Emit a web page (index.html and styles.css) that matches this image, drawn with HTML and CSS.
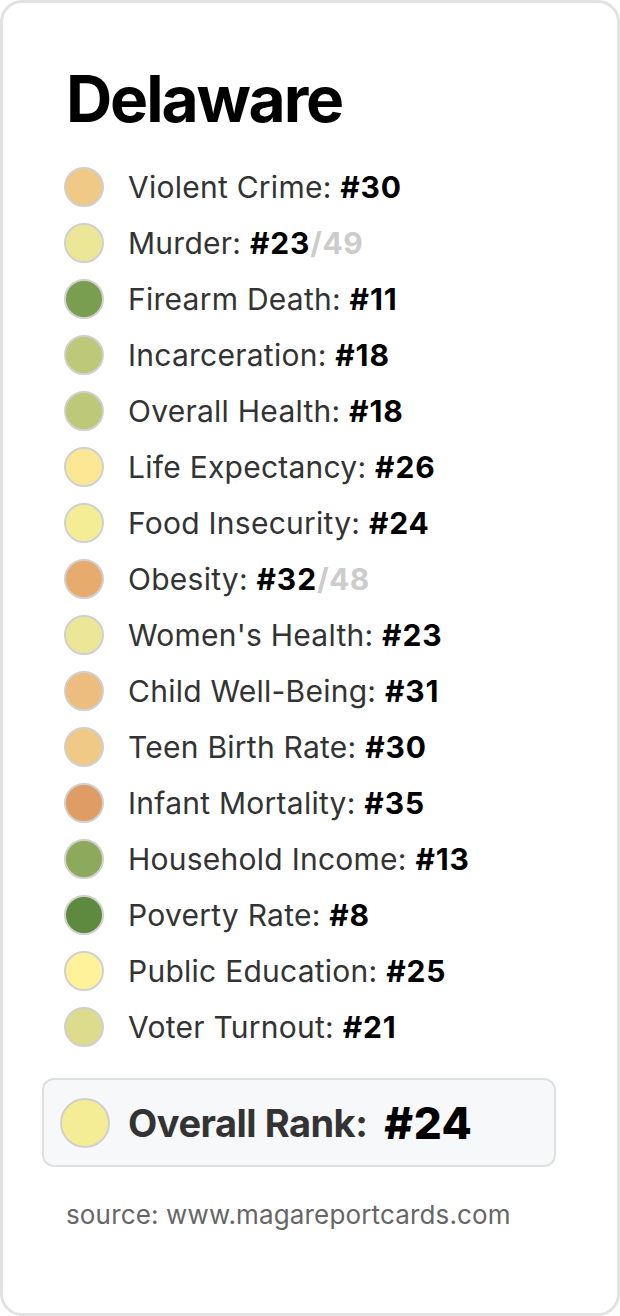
FILE: index.html
```html
<!DOCTYPE html>
<html lang="en">
<head>
<meta charset="utf-8">
<title>Delaware</title>
<link rel="stylesheet" href="styles.css">
</head>
<body>
<div class="card">
  <h1 class="title">Delaware</h1>
  <ul class="list">
    <li class="row"><span class="dot" style="background:#f0c987"></span><span class="label">Violent Crime: <b>#30</b></span></li>
    <li class="row"><span class="dot" style="background:#ece797"></span><span class="label">Murder: <b>#23</b><b class="of">/49</b></span></li>
    <li class="row"><span class="dot" style="background:#7a9e50"></span><span class="label">Firearm Death: <b>#11</b></span></li>
    <li class="row"><span class="dot" style="background:#bdc878"></span><span class="label">Incarceration: <b>#18</b></span></li>
    <li class="row"><span class="dot" style="background:#bdc878"></span><span class="label">Overall Health: <b>#18</b></span></li>
    <li class="row"><span class="dot" style="background:#fbe794"></span><span class="label">Life Expectancy: <b>#26</b></span></li>
    <li class="row"><span class="dot" style="background:#f5ec96"></span><span class="label">Food Insecurity: <b>#24</b></span></li>
    <li class="row"><span class="dot" style="background:#e8ab6e"></span><span class="label">Obesity: <b>#32</b><b class="of">/48</b></span></li>
    <li class="row"><span class="dot" style="background:#ece797"></span><span class="label">Women's Health: <b>#23</b></span></li>
    <li class="row"><span class="dot" style="background:#ecbd7e"></span><span class="label">Child Well-Being: <b>#31</b></span></li>
    <li class="row"><span class="dot" style="background:#f0c987"></span><span class="label">Teen Birth Rate: <b>#30</b></span></li>
    <li class="row"><span class="dot" style="background:#e09c65"></span><span class="label">Infant Mortality: <b>#35</b></span></li>
    <li class="row"><span class="dot" style="background:#8daa5c"></span><span class="label">Household Income: <b>#13</b></span></li>
    <li class="row"><span class="dot" style="background:#5e8a40"></span><span class="label">Poverty Rate: <b>#8</b></span></li>
    <li class="row"><span class="dot" style="background:#fef39a"></span><span class="label">Public Education: <b>#25</b></span></li>
    <li class="row"><span class="dot" style="background:#dcdc8c"></span><span class="label">Voter Turnout: <b>#21</b></span></li>
  </ul>
  <div class="overall">
    <span class="dot big" style="background:#f5ec96"></span>
    <span class="overall-label">Overall Rank:</span>
    <span class="overall-rank">#24</span>
  </div>
  <p class="source">source: www.magareportcards.com</p>
</div>
</body>
</html>
```

FILE: styles.css
```css
html, body {
  margin: 0;
  padding: 0;
  background: #ffffff;
}

body {
  font-family: Inter, "Liberation Sans", Arial, sans-serif;
  color: #333333;
}

.card {
  box-sizing: border-box;
  width: 620px;
  height: 1316px;
  border: 3px solid #e2e2e2;
  border-radius: 22px;
  background: #ffffff;
  padding: 60px 62px 0 39px;
}

.title {
  margin: 0 0 0 24px;
  font-size: 64px;
  line-height: 72px;
  font-weight: 700;
  color: #000000;
  letter-spacing: -2.1px;
}

.list {
  list-style: none;
  margin: 24px 0 0 0;
  padding: 0 0 0 22px;
}

.row {
  display: flex;
  align-items: center;
  height: 56px;
  gap: 24px;
}

.dot {
  flex: none;
  box-sizing: border-box;
  width: 40px;
  height: 40px;
  border-radius: 50%;
  border: 2px solid #d0d0d0;
}

.label {
  font-size: 30px;
  color: #333333;
  letter-spacing: 0.25px;
}

.label b {
  color: #000000;
  font-weight: 700;
  letter-spacing: 0.9px;
}

.label b.of {
  color: #cccccc;
  letter-spacing: 0.5px;
}

.overall {
  display: flex;
  align-items: center;
  box-sizing: border-box;
  width: 514px;
  height: 89px;
  margin-top: 23px;
  padding-left: 16px;
  border: 2px solid #e0e0e0;
  border-radius: 12px;
  background: #f7f8fa;
}

.dot.big {
  width: 50px;
  height: 50px;
}

.overall-label {
  margin-left: 18px;
  font-size: 38px;
  font-weight: 700;
  color: #333333;
  letter-spacing: -0.5px;
}

.overall-rank {
  margin-left: 17px;
  font-size: 44px;
  font-weight: 800;
  color: #000000;
  letter-spacing: 0.5px;
}

.source {
  margin: 32px 0 0 24px;
  font-size: 26px;
  color: #666666;
  letter-spacing: 0.15px;
}
```
